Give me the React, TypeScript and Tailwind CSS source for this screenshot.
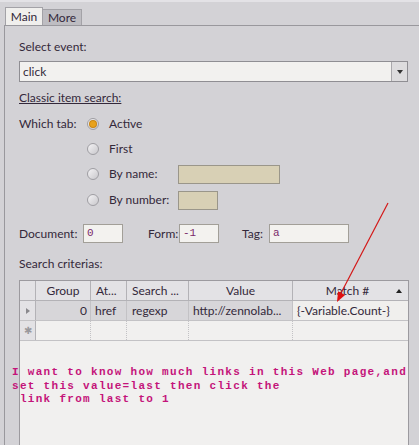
import React from 'react';

const ui = "font-['Lato','Noto_Sans',sans-serif] text-[12px] text-[#33283a]";

const Radio: React.FC<{ checked?: boolean }> = ({ checked }) => (
  <span className="flex h-[12px] w-[12px] items-center justify-center rounded-full border border-[#9f9ea3] bg-gradient-to-br from-[#f4f3f5] to-[#c9c8cc]">
    {checked && <span className="h-[6px] w-[6px] rounded-full bg-[#e8a21c] ring-1 ring-[#c98512]" />}
  </span>
);

const Field: React.FC<{ w: string; value: string }> = ({ w, value }) => (
  <div className={`${w} flex h-[19px] items-center border border-[#a29f98] bg-[#f3f2ef] px-[3px] font-['Liberation_Mono',monospace] text-[11px] text-[#7a2a6a]`}>
    {value}
  </div>
);

const cols = ['w-[16px]', 'w-[55px]', 'w-[36px]', 'w-[62px]', 'w-[104px]', 'flex-1'];

const App: React.FC = () => {
  return (
    <div className={`${ui} relative flex h-[445px] w-[419px] flex-col overflow-hidden bg-[#d3d2d6]`}>
      {/* top strip */}
      <div className="h-[7px] border-t-2 border-[#e3e2e6]" />

      {/* tabs */}
      <div className="flex h-[18px] items-end pl-[5px]">
        <div className="flex h-[18px] w-[38px] items-center justify-center border border-b-0 border-[#a3a2a7] bg-[#f0efed]">Main</div>
        <div className="flex h-[16px] w-[39px] items-center justify-center border border-b-0 border-l-0 border-[#a3a2a7] bg-[#bebdc2]">More</div>
      </div>

      {/* panel */}
      <div className="ml-[4px] flex flex-1 flex-col border-l border-t border-[#99989d] pl-[14px] pr-[10px] pt-[13px]">
        <div className="h-[16px] leading-[16px]">Select event:</div>
        <div className="mt-[6px] flex h-[21px] w-[389px] border border-[#8f8e93] bg-[#f2f1ef]">
          <div className="flex flex-1 items-center px-[3px]">click</div>
          <div className="flex w-[16px] items-center justify-center border-l border-[#a9a8ac] bg-[#dddcde]">
            <span className="border-x-[3.5px] border-t-[4px] border-x-transparent border-t-[#333]" />
          </div>
        </div>
        <div className="mt-[8px] h-[16px] leading-[16px] underline">Classic item search:</div>

        {/* which tab */}
        <div className="mt-[8px] flex">
          <div className="h-[20px] w-[68px] leading-[20px]">Which tab:</div>
          <div className="flex flex-col gap-[5px]">
            <div className="flex h-[20px] items-center">
              <Radio checked />
              <span className="ml-[10px]">Active</span>
            </div>
            <div className="flex h-[20px] items-center">
              <Radio />
              <span className="ml-[10px]">First</span>
            </div>
            <div className="flex h-[20px] items-center">
              <Radio />
              <span className="ml-[10px] w-[69px]">By name:</span>
              <div className="h-[19px] w-[102px] border border-[#9a968a] bg-[#d8d0b5]" />
            </div>
            <div className="mt-[1px] flex h-[20px] items-center">
              <Radio />
              <span className="ml-[10px] w-[69px]">By number:</span>
              <div className="h-[19px] w-[40px] border border-[#9a968a] bg-[#d8d0b5]" />
            </div>
          </div>
        </div>

        {/* document / form / tag */}
        <div className="mt-[14px] flex h-[19px] items-center">
          <span className="w-[64px]">Document:</span>
          <Field w="w-[40px]" value="0" />
          <span className="ml-[25px] w-[31px]">Form:</span>
          <Field w="w-[40px]" value="-1" />
          <span className="ml-[23px] w-[27px]">Tag:</span>
          <Field w="w-[80px]" value="a" />
        </div>

        <div className="mt-[13px] h-[16px] leading-[16px]">Search criterias:</div>

        {/* grid */}
        <div className="mt-[8px] flex w-[390px] flex-1 flex-col border border-b-0 border-[#9c9a9f] bg-[#f1f0ef]">
          <div className="flex h-[20px] border-b border-[#b3b2b6] bg-[#e3e2e5]">
            <div className={`${cols[0]} border-r border-[#b3b2b6]`} />
            <div className={`${cols[1]} border-r border-[#b3b2b6] text-center leading-[19px]`}>Group</div>
            <div className={`${cols[2]} border-r border-[#b3b2b6] pl-[5px] leading-[19px]`}>At...</div>
            <div className={`${cols[3]} border-r border-[#b3b2b6] pl-[5px] leading-[19px]`}>Search ...</div>
            <div className={`${cols[4]} border-r border-[#b3b2b6] text-center leading-[19px]`}>Value</div>
            <div className={`${cols[5]} flex items-center pr-[6px]`}>
              <span className="flex-1 pl-[6px] text-center">Match #</span>
              <span className="border-x-[3.5px] border-b-[4px] border-x-transparent border-b-[#222]" />
            </div>
          </div>
          <div className="flex h-[20px] border-b border-[#c3c2c5] bg-[#d7d6d9]">
            <div className={`${cols[0]} flex items-center justify-center border-r border-[#b3b2b6] bg-[#e3e2e5]`}>
              <span className="border-y-[3.5px] border-l-[4px] border-y-transparent border-l-[#8a898d]" />
            </div>
            <div className={`${cols[1]} border-r border-[#c3c2c5] pr-[3px] text-right leading-[19px]`}>0</div>
            <div className={`${cols[2]} border-r border-[#c3c2c5] pl-[4px] leading-[19px]`}>href</div>
            <div className={`${cols[3]} border-r border-[#c3c2c5] pl-[5px] leading-[19px]`}>regexp</div>
            <div className={`${cols[4]} overflow-hidden whitespace-nowrap border-r border-[#c3c2c5] pl-[4px] leading-[19px]`}>http://zennolab...</div>
            <div className={`${cols[5]} bg-[#f0efed] pl-[4px] leading-[19px]`}>{'{-Variable.Count-}'}</div>
          </div>
          <div className="flex h-[20px] border-b border-[#c3c2c5]">
            <div className={`${cols[0]} flex items-center justify-center border-r border-[#b3b2b6] bg-[#e3e2e5] text-[10px] text-[#9a999d]`}>✱</div>
            <div className={`${cols[1]} border-r border-dotted border-[#c3c2c5]`} />
            <div className={`${cols[2]} border-r border-dotted border-[#c3c2c5]`} />
            <div className={`${cols[3]} border-r border-dotted border-[#c3c2c5]`} />
            <div className={`${cols[4]} border-r border-dotted border-[#c3c2c5]`} />
            <div className={cols[5]} />
          </div>
        </div>
      </div>

      {/* annotation text */}
      <div className="absolute left-[12px] top-[366px] whitespace-pre font-['Liberation_Mono',monospace] text-[11px] font-bold leading-[13.5px] tracking-[1.3px] text-[#c4147a]">
        {'I want to know how much links in this Web page,and\nset this value=last then click the\n link from last to 1'}
      </div>

      {/* red arrow */}
      <svg className="pointer-events-none absolute left-0 top-0" width="419" height="445">
        <line x1="388" y1="203" x2="340" y2="295" stroke="#d41818" strokeWidth="1.2" />
        <polygon points="337,302 345.1,294.9 338.1,291.3" fill="#e01010" />
      </svg>
    </div>
  );
};

export default App;
